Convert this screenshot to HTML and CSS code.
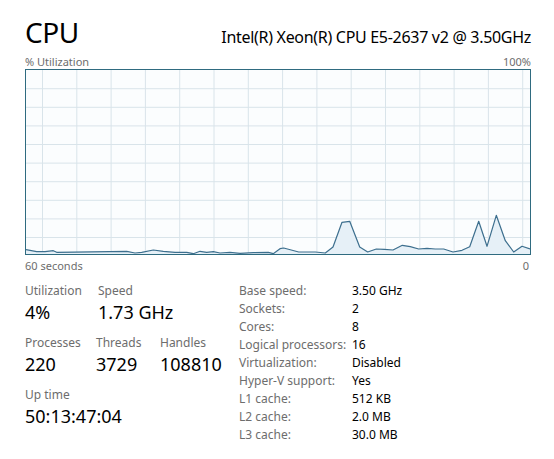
FILE: index.html
```html
<!DOCTYPE html>
<html lang="en">
<head>
<meta charset="utf-8">
<title>CPU</title>
<link rel="stylesheet" href="styles.css">
</head>
<body>
<main class="page">
  <header class="header">
    <h1 class="title">CPU</h1>
    <div class="model">Intel(R) Xeon(R) CPU E5-2637 v2 @ 3.50GHz</div>
  </header>

  <div class="axis axis-top">
    <span>% Utilization</span>
    <span>100%</span>
  </div>

  <div class="graph">
    <svg class="graph-svg" viewBox="0 0 504 184" width="504" height="184" preserveAspectRatio="none">
      <g class="grid">
        <line x1="16.5" y1="0" x2="16.5" y2="184"/>
        <line x1="50.8" y1="0" x2="50.8" y2="184"/>
        <line x1="85.1" y1="0" x2="85.1" y2="184"/>
        <line x1="119.4" y1="0" x2="119.4" y2="184"/>
        <line x1="153.7" y1="0" x2="153.7" y2="184"/>
        <line x1="188" y1="0" x2="188" y2="184"/>
        <line x1="222.3" y1="0" x2="222.3" y2="184"/>
        <line x1="256.6" y1="0" x2="256.6" y2="184"/>
        <line x1="290.9" y1="0" x2="290.9" y2="184"/>
        <line x1="325.2" y1="0" x2="325.2" y2="184"/>
        <line x1="359.5" y1="0" x2="359.5" y2="184"/>
        <line x1="393.8" y1="0" x2="393.8" y2="184"/>
        <line x1="428.1" y1="0" x2="428.1" y2="184"/>
        <line x1="462.4" y1="0" x2="462.4" y2="184"/>
        <line x1="496.7" y1="0" x2="496.7" y2="184"/>
        <line x1="0" y1="18.7" x2="504" y2="18.7"/>
        <line x1="0" y1="37.3" x2="504" y2="37.3"/>
        <line x1="0" y1="55.9" x2="504" y2="55.9"/>
        <line x1="0" y1="74.5" x2="504" y2="74.5"/>
        <line x1="0" y1="93.1" x2="504" y2="93.1"/>
        <line x1="0" y1="111.7" x2="504" y2="111.7"/>
        <line x1="0" y1="130.3" x2="504" y2="130.3"/>
        <line x1="0" y1="148.9" x2="504" y2="148.9"/>
        <line x1="0" y1="167.5" x2="504" y2="167.5"/>
      </g>
      <path class="area" d="M0 184 L0 179.7 L10.7 181.7 L19 181.7 L27.3 180.7 L30.7 182.3 L100.7 181.3 L109 183 L115.7 182.3 L127.3 180 L137.3 181.3 L149 182.3 L160.7 182.3 L167.3 183.7 L174 181.3 L180.7 182.3 L187.3 181.7 L194 183 L204 182.3 L214 183.3 L227.3 182.7 L242.3 182.3 L247.3 183.7 L254 178.7 L257.7 178 L272.7 182 L289.3 182 L299.3 183 L307 177 L316 152.3 L323.7 151.3 L333.7 177 L341.7 182 L350.3 179 L358.3 179.3 L367 180 L376.3 175.3 L384.3 176.7 L392.7 179 L401 178.3 L409.3 179 L417.7 179 L427 182 L436 180.3 L443.7 176.7 L452.7 151.3 L461 176.3 L470.3 145.3 L479.3 170.7 L487.7 182 L496 176.3 L504 179 L504 184 Z"/>
      <path class="line" d="M0 179.7 L10.7 181.7 L19 181.7 L27.3 180.7 L30.7 182.3 L100.7 181.3 L109 183 L115.7 182.3 L127.3 180 L137.3 181.3 L149 182.3 L160.7 182.3 L167.3 183.7 L174 181.3 L180.7 182.3 L187.3 181.7 L194 183 L204 182.3 L214 183.3 L227.3 182.7 L242.3 182.3 L247.3 183.7 L254 178.7 L257.7 178 L272.7 182 L289.3 182 L299.3 183 L307 177 L316 152.3 L323.7 151.3 L333.7 177 L341.7 182 L350.3 179 L358.3 179.3 L367 180 L376.3 175.3 L384.3 176.7 L392.7 179 L401 178.3 L409.3 179 L417.7 179 L427 182 L436 180.3 L443.7 176.7 L452.7 151.3 L461 176.3 L470.3 145.3 L479.3 170.7 L487.7 182 L496 176.3 L504 179"/>
    </svg>
  </div>

  <div class="axis axis-bottom">
    <span>60 seconds</span>
    <span class="zero">0</span>
  </div>

  <section class="details">
    <div class="stats">
      <div class="stat-row row-a">
        <div class="stat">
          <div class="label">Utilization</div>
          <div class="value">4%</div>
        </div>
        <div class="stat">
          <div class="label">Speed</div>
          <div class="value">1.73 GHz</div>
        </div>
      </div>
      <div class="stat-row row-b">
        <div class="stat">
          <div class="label">Processes</div>
          <div class="value">220</div>
        </div>
        <div class="stat">
          <div class="label">Threads</div>
          <div class="value">3729</div>
        </div>
        <div class="stat">
          <div class="label">Handles</div>
          <div class="value">108810</div>
        </div>
      </div>
      <div class="stat-row">
        <div class="stat">
          <div class="label">Up time</div>
          <div class="value">50:13:47:04</div>
        </div>
      </div>
    </div>

    <dl class="specs">
      <dt>Base speed:</dt><dd>3.50 GHz</dd>
      <dt>Sockets:</dt><dd>2</dd>
      <dt>Cores:</dt><dd>8</dd>
      <dt>Logical processors:</dt><dd>16</dd>
      <dt>Virtualization:</dt><dd>Disabled</dd>
      <dt>Hyper-V support:</dt><dd>Yes</dd>
      <dt>L1 cache:</dt><dd>512 KB</dd>
      <dt>L2 cache:</dt><dd>2.0 MB</dd>
      <dt>L3 cache:</dt><dd>30.0 MB</dd>
    </dl>
  </section>
</main>
</body>
</html>
```

FILE: styles.css
```css
* { box-sizing: border-box; }

html, body {
  margin: 0;
  padding: 0;
  background: #ffffff;
}

body {
  font-family: "Noto Sans", "Open Sans", sans-serif;
  color: #000;
}

.page {
  width: 554px;
  padding: 15px 23px 0 25px;
}

.header {
  display: flex;
  justify-content: space-between;
  align-items: baseline;
  height: 38px;
}

.title {
  margin: 0;
  font-size: 28px;
  font-weight: 400;
  line-height: 34px;
  letter-spacing: -0.4px;
}

.model {
  font-size: 16px;
  line-height: 20px;
  letter-spacing: -0.3px;
}

.axis {
  display: flex;
  justify-content: space-between;
  font-size: 11px;
  line-height: 15px;
  color: #6d6d6d;
}

.axis-top {
  margin-top: 1px;
}

.axis-bottom {
  margin-top: 3px;
}

.zero {
  padding-right: 2px;
}

.graph {
  width: 506px;
  height: 186px;
  border: 1px solid #2f6b80;
  background: #fbfdfe;
}

.graph-svg {
  display: block;
}

.grid line {
  stroke: #d9e4ea;
  stroke-width: 1;
}

.area {
  fill: #e6f0f7;
}

.line {
  fill: none;
  stroke: #3d6f8e;
  stroke-width: 1.2;
  stroke-linejoin: round;
}

.details {
  display: flex;
  margin-top: 9px;
}

.stats {
  width: 214px;
}

.stat-row {
  display: grid;
  grid-template-columns: auto;
  margin-bottom: 9px;
}

.row-a {
  grid-template-columns: 73px auto;
}

.row-b {
  grid-template-columns: 71px 64px auto;
}

.label {
  font-size: 12px;
  line-height: 17px;
  color: #6d6d6d;
}

.value {
  font-size: 18px;
  line-height: 26px;
  color: #000;
}

.specs {
  margin: 0;
  display: grid;
  grid-template-columns: 113px auto;
  font-size: 12px;
  line-height: 18px;
}

.specs dt {
  color: #6d6d6d;
}

.specs dd {
  margin: 0;
  color: #000;
}
```
